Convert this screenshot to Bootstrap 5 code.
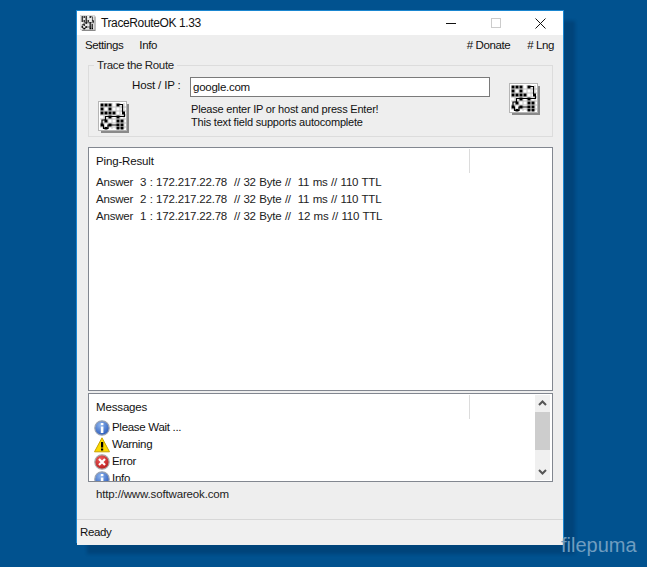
<!DOCTYPE html>
<html lang="en"><head><meta charset="utf-8"><title>TraceRouteOK</title>
<link rel="stylesheet" href="https://cdn.jsdelivr.net/npm/bootstrap@5.3.0/dist/css/bootstrap.min.css">
<style>
html,body{height:100%}
body{background:#01528f;font-family:"Liberation Sans",Arial,sans-serif;font-size:11.5px;letter-spacing:-.15px;color:#111;overflow:hidden;position:relative;line-height:17px}
.desk{padding:10px 0 0 76px}
.win{width:488px;height:533px;background:#eeeeee;border:1px solid #1a86d0;border-bottom-width:2px;box-shadow:11px 11px 3px rgba(0,35,75,.3);display:flex;flex-direction:column}
.ttl{height:24px;background:#fff;flex:none;padding-left:3px}
.ttl-text{font-size:12px;letter-spacing:-.38px;margin-left:5px}
.wbtn{width:45px;height:24px;display:flex;align-items:center;justify-content:center}
.mnu{height:20px;padding:0 9px 0 8px;flex:none;letter-spacing:-.4px}
.mnu span{margin-right:16px}
.mnu .rt{margin-right:0;margin-left:17px}
.grp{position:relative;height:72px;margin:10px 10px 10px 11px;border:1px solid #dcdcdc;flex:none}
.grp-t{position:absolute;left:5px;top:-9px;background:#eeeeee;padding:0 3px;color:#222;letter-spacing:-.35px}
.host{position:absolute;left:43px;top:11px}
.inp{position:absolute;left:101px;top:11px;width:300px;height:20px;background:#fff;border:1px solid #7a7a7a;padding:1px 2px;line-height:16px;letter-spacing:-.25px}
.hint{position:absolute;left:102px;top:37px;line-height:13px;font-size:11px;letter-spacing:-.2px}
.ico1{position:absolute;left:9px;top:35px}
.ico2{position:absolute;left:420px;top:17px}
.pane{background:#fff;border:1px solid #828790;margin:0 10px 0 11px;position:relative;flex:none}
.pane-r{height:244px}
.pane-m{height:89px;margin-top:2px;overflow:hidden}
.hdr{height:26px;padding:5px 7px;position:relative}
.pane-m .hdr{height:25px}
.hdr-sep{position:absolute;left:380px;top:1px;width:1px;height:24px;background:#dcdcdc}
.rows{padding:0 7px;color:#222}
.rows div{height:17px;white-space:pre;letter-spacing:-.2px;word-spacing:.45px}
.msg{height:17px;display:flex;align-items:center;padding-left:5px;gap:2px;letter-spacing:-.3px}
.sb{position:absolute;right:2px;top:1px;bottom:1px;width:15px;background:#f0f0f0}
.sb-th{position:absolute;left:0;right:0;top:17px;height:38px;background:#cdcdcd}
.url{padding:4px 19px 0;height:37px;flex:none;color:#222}
.stat{border-top:1px solid #d7d7d7;flex:1 1 auto;padding:4px 3px;background:#f0f0f0;letter-spacing:-.4px}
.wm{position:absolute;left:561px;top:533px;font-size:20px;letter-spacing:0;color:#6f9dc0;line-height:24px}
</style></head>
<body>
<svg width="0" height="0" class="position-absolute"><defs>
<symbol id="gridico" viewBox="0 0 31 32">
<rect x="3" y="3" width="28" height="29" fill="#8a8a8a"/>
<rect x=".5" y=".5" width="28" height="29" fill="#fff" stroke="#b5b5b5"/>
<path d="M2 6h26M2 10h26M2 14h26M2 18h26M2 22h26M2 26h26M6 2v26M10 2v26M14 2v26M18 2v26M22 2v26M26 2v26" stroke="#c4c4c4" fill="none"/>
<path d="M2.500 2.500h3v3h-3zM6.500 2.500h3v3h-3zM10.500 2.500h3v3h-3zM18.500 2.500h3v3h-3zM2.500 6.500h3v3h-3zM10.500 6.500h3v3h-3zM2.500 10.500h3v3h-3zM6.500 10.500h3v3h-3zM10.500 10.500h3v3h-3zM14.500 10.500h3v3h-3zM24 10.500h3v3h-3zM10.500 14.500h3v3h-3zM18.500 14.500h3v3h-3zM6.500 18.500h3v3h-3zM18.500 18.500h3v3h-3zM22.500 18.500h3v3h-3zM2.500 22.500h3v3h-3zM10.500 22.500h3v3h-3zM18.500 22.500h3v3h-3zM22.500 22.500h3v3h-3zM6.500 26h3v2.500h-3zM18.500 26h3v2.500h-3zM22.500 26h3v2.500h-3z" fill="#000"/>
<path d="M20 3.500h4.500v7.500l2 2v2.500h-19v3.500h-3.500v5h1.500v3.500h4.500v-3.500h11" fill="none" stroke="#000" stroke-width="1.200"/>
</symbol>
<radialGradient id="ib" cx=".4" cy=".3" r=".8"><stop offset="0" stop-color="#8fb6ee"/><stop offset="1" stop-color="#1d4fb5"/></radialGradient>
<radialGradient id="er" cx=".4" cy=".3" r=".8"><stop offset="0" stop-color="#ee5a5a"/><stop offset="1" stop-color="#b31818"/></radialGradient>
<symbol id="info" viewBox="0 0 16 16"><circle cx="8" cy="8" r="7.200" fill="url(#ib)" stroke="#9aa3b2" stroke-width="1.200"/><rect x="6.800" y="3" width="2.600" height="2.200" fill="#fff"/><rect x="6.800" y="6.500" width="2.600" height="6.500" fill="#fff"/></symbol>
<symbol id="warn" viewBox="0 0 16 16"><path d="M8 .8 15.500 14.800H.5Z" fill="#fbd900" stroke="#c8a200"/><rect x="7" y="5" width="2.200" height="5.500"/><rect x="7" y="11.500" width="2.200" height="2"/></symbol>
<symbol id="err" viewBox="0 0 16 16"><circle cx="8" cy="8" r="7.200" fill="url(#er)" stroke="#a8a8a8" stroke-width="1.200"/><path d="M5 5l6 6M11 5l-6 6" stroke="#fff" stroke-width="2.200"/></symbol>
</defs></svg>
<div class="desk">
<div class="win">
  <div class="ttl d-flex align-items-center">
    <svg width="16" height="16" viewBox="0 0 31 32"><use href="#gridico"/></svg>
    <span class="ttl-text flex-grow-1">TraceRouteOK 1.33</span>
    <div class="d-flex">
      <div class="wbtn"><svg width="10" height="10"><path d="M0 5.500h10" stroke="#111"/></svg></div>
      <div class="wbtn"><svg width="10" height="10"><rect x=".5" y=".5" width="9" height="9" fill="none" stroke="#ccc"/></svg></div>
      <div class="wbtn"><svg width="11" height="11"><path d="M.5.500l10 10M10.500.500l-10 10" stroke="#111"/></svg></div>
    </div>
  </div>
  <div class="mnu d-flex align-items-center">
    <span>Settings</span><span>Info</span>
    <span class="rt ms-auto">#&nbsp;Donate</span><span class="rt"># Lng</span>
  </div>
  <div class="grp">
    <div class="grp-t">Trace the Route</div>
    <div class="host">Host / IP :</div>
    <div class="inp">google.com</div>
    <div class="hint">Please enter IP or host and press Enter!<br>This text field supports autocomplete</div>
    <svg class="ico1" width="31" height="32"><use href="#gridico"/></svg>
    <svg class="ico2" width="31" height="32"><use href="#gridico"/></svg>
  </div>
  <div class="pane pane-r">
    <div class="hdr">Ping-Result<div class="hdr-sep"></div></div>
    <div class="rows">
      <div>Answer  3 : 172.217.22.78  // 32 Byte //  11 ms // 110 TTL</div>
      <div>Answer  2 : 172.217.22.78  // 32 Byte //  11 ms // 110 TTL</div>
      <div>Answer  1 : 172.217.22.78  // 32 Byte //  12 ms // 110 TTL</div>
    </div>
  </div>
  <div class="pane pane-m">
    <div class="hdr">Messages<div class="hdr-sep"></div></div>
    <div class="msg"><svg width="16" height="16"><use href="#info"/></svg>Please Wait ...</div>
    <div class="msg"><svg width="16" height="16"><use href="#warn"/></svg>Warning</div>
    <div class="msg"><svg width="16" height="16"><use href="#err"/></svg>Error</div>
    <div class="msg"><svg width="16" height="16"><use href="#info"/></svg>Info</div>
    <div class="sb">
      <svg class="position-absolute top-0 start-0" width="15" height="17"><path d="M4 10l3.500-3.500L11 10" fill="none" stroke="#555" stroke-width="2"/></svg>
      <div class="sb-th"></div>
      <svg class="position-absolute bottom-0 start-0" width="15" height="17"><path d="M4 7l3.500 3.500L11 7" fill="none" stroke="#555" stroke-width="2"/></svg>
    </div>
  </div>
  <div class="url">http://www.softwareok.com</div>
  <div class="stat">Ready</div>
</div>
</div>
<div class="wm">filepuma</div>
</body></html>
